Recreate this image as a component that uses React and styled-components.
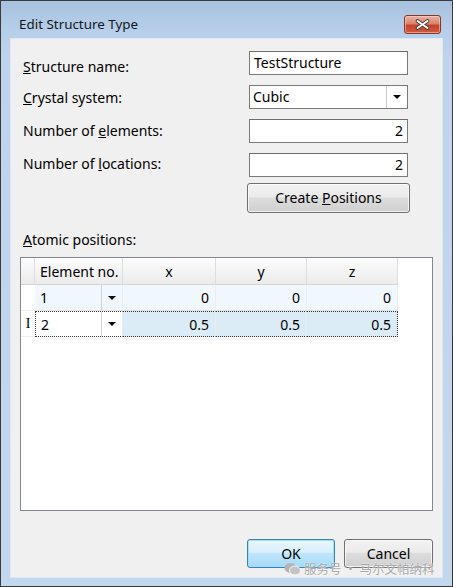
import styled, { createGlobalStyle } from "styled-components";

const Global = createGlobalStyle`
body {
  margin: 0;
  font-family: "Noto Sans", "Liberation Sans", sans-serif;
}
`

const Window = styled.div`
position: relative;
width: 453px;
height: 587px;
box-sizing: border-box;
border: 1px solid #3a3a3a;
background: linear-gradient(to bottom, #a7c1de 0px, #b7cfe9 30px, #bdd4ec 60px, #c2d8ef 100%);
display: flex;
flex-direction: column;
`

const TitleBar = styled.div`
height: 37px;
box-sizing: border-box;
padding: 9px 11px 0 18px;
display: flex;
align-items: center;
justify-content: space-between;
`

const Title = styled.span`
font-size: 13.4px;
color: #101820;
`

const CloseButton = styled.div`
width: 37px;
height: 19px;
box-sizing: border-box;
border: 1px solid #8a3424;
border-radius: 3px;
background: linear-gradient(to bottom, #eab3a5 0%, #d9826e 45%, #c5432c 55%, #cf5a3f 100%);
box-shadow: inset 0 0 0 1px rgba(255, 220, 210, 0.5);
display: flex;
align-items: center;
justify-content: center;
`

const Client = styled.div`
flex: 1;
margin: 0 9px 8px 9px;
background: #f0f0f0;
border: 1px solid #dde8f4;
padding: 12px 9px 0 9px;
display: flex;
flex-direction: column;
`

const Form = styled.div`
display: grid;
grid-template-columns: 226px 159px;
grid-auto-rows: 24px;
row-gap: 10px;
padding-left: 3px;
align-items: center;
`

const Label = styled.label`
font-size: 14px;
color: #000;
padding-top: ${(p) => Math.max(p.$dy || 0, 0) * 2}px;
padding-bottom: ${(p) => Math.max(-(p.$dy || 0), 0) * 2}px;
`

const TextBox = styled.div`
height: 24px;
box-sizing: border-box;
border: 1px solid #7a7a7a;
border-top-color: #6e6e6e;
background: #fff;
font-size: 14px;
line-height: 22px;
padding: 0 4px;
text-align: ${(p) => (p.$right ? "right" : "left")};
`

const Combo = styled.div`
height: 24px;
box-sizing: border-box;
border: 1px solid #7a7a7a;
background: #fff;
display: flex;
font-size: 14px;
line-height: 22px;
`

const ComboText = styled.span`
flex: 1;
padding: 0 3px;
`

const ComboArrow = styled.span`
width: 20px;
border-left: 1px solid #c8c8c8;
display: flex;
align-items: center;
justify-content: center;
`

const Arrow = styled.span`
width: 0;
height: 0;
border-left: 4px solid transparent;
border-right: 4px solid transparent;
border-top: 4px solid #000;
`

const Button = styled.div`
box-sizing: border-box;
width: ${(p) => p.$w}px;
height: ${(p) => p.$h}px;
border: 1px solid ${(p) => (p.$primary ? "#3c7fb1" : "#707070")};
border-radius: 3px;
background: ${(p) =>
  p.$primary
    ? "linear-gradient(to bottom, #eaf6fd 0%, #d9f0fc 45%, #bee6fd 50%, #a7d9f5 100%)"
    : "linear-gradient(to bottom, #f2f2f2 0%, #ebebeb 45%, #dddddd 50%, #cfcfcf 100%)"};
box-shadow: inset 0 0 0 1px ${(p) => (p.$primary ? "rgba(150, 225, 255, 0.9)" : "rgba(255,255,255,0.7)")};
display: flex;
align-items: center;
justify-content: center;
font-size: 14px;
color: #000;
`

const CreateButton = styled(Button)`
margin-left: -2px;
margin-top: -3px;
grid-column: 2;
`

const SectionLabel = styled(Label)`
margin: 20px 0 8px 3px;
line-height: 18px;
`

const Grid = styled.div`
height: 254px;
box-sizing: border-box;
border: 1px solid #828790;
background: #fff;
`

const Table = styled.div`
display: grid;
grid-template-columns: 14px 88px 93px 91px 91px;
grid-template-rows: 27px 26px 26px;
width: 377px;
font-size: 14px;
`

const HeadCell = styled.div`
background: linear-gradient(to bottom, #fdfdfd 0%, #f4f4f4 50%, #ebebeb 100%);
border-right: 1px solid #dedede;
border-bottom: 1px solid #d5d5d5;
display: flex;
align-items: center;
justify-content: ${(p) => (p.$left ? "flex-start" : "center")};
padding-left: ${(p) => (p.$left ? 5 : 0)}px;
`

const RowHead = styled.div`
background: #fff;
border-bottom: 1px solid #eeeeee;
display: flex;
align-items: center;
justify-content: center;
font-family: "Liberation Serif", serif;
font-size: 14px;
`

const Cell = styled.div`
background: ${(p) => p.$bg};
border-right: 1px solid #e6eef6;
border-bottom: 1px solid #e4e4e4;
display: flex;
align-items: center;
justify-content: flex-end;
padding-right: 6px;
border-top: ${(p) => (p.$focus ? "1px dotted #333" : "none")};
border-bottom-style: ${(p) => (p.$focus ? "dotted" : "solid")};
border-bottom-color: ${(p) => (p.$focus ? "#333" : "#e4e4e4")};
border-right-color: ${(p) => (p.$last && p.$focus ? "#333" : "#e6eef6")};
border-right-style: ${(p) => (p.$last && p.$focus ? "dotted" : "solid")};
`

const ElemCell = styled(Cell)`
justify-content: space-between;
padding: 0;
border-left: ${(p) => (p.$focus ? "1px dotted #333" : "none")};
`

const ElemValue = styled.span`
padding-left: 5px;
`

const ElemDrop = styled.span`
width: 20px;
align-self: stretch;
border-left: 1px solid #d4d4d4;
display: flex;
align-items: center;
justify-content: center;
`

const ButtonRow = styled.div`
display: flex;
justify-content: flex-end;
gap: 9px;
margin-top: 28px;
`

const Watermark = styled.div`
position: absolute;
left: 283px;
top: 558px;
display: flex;
align-items: center;
gap: 3px;
font-family: "Noto Sans CJK SC", sans-serif;
font-size: 12.5px;
color: #a9a9a9;
text-shadow: 0 0 2px #ffffff;
`

const rows = [
  { el: "1", vals: ["0", "0", "0"], focus: false },
  { el: "2", vals: ["0.5", "0.5", "0.5"], focus: true },
];

export default function App() {
  return (
    <Window>
      <Global />
      <TitleBar>
        <Title>Edit Structure Type</Title>
        <CloseButton>
          <svg width="15" height="11" viewBox="0 0 15 11">
            <path d="M2.5 2 L12.5 9 M12.5 2 L2.5 9" stroke="#4a3530" strokeWidth="3.6" strokeLinecap="round" />
            <path d="M2.5 2 L12.5 9 M12.5 2 L2.5 9" stroke="#ffffff" strokeWidth="2" strokeLinecap="round" />
          </svg>
        </CloseButton>
      </TitleBar>
      <Client>
        <Form>
          <Label $dy={3}><u>S</u>tructure name:</Label>
          <TextBox>TestStructure</TextBox>
          <Label $dy={0}><u>C</u>rystal system:</Label>
          <Combo>
            <ComboText>Cubic</ComboText>
            <ComboArrow><Arrow /></ComboArrow>
          </Combo>
          <Label $dy={-1}>Number of <u>e</u>lements:</Label>
          <TextBox $right>2</TextBox>
          <Label $dy={-2}>Number of <u>l</u>ocations:</Label>
          <TextBox $right>2</TextBox>
          <CreateButton $w={163} $h={30}>
            <span>Create <u>P</u>ositions</span>
          </CreateButton>
        </Form>
        <SectionLabel><u>A</u>tomic positions:</SectionLabel>
        <Grid>
          <Table>
            <HeadCell />
            <HeadCell $left>Element no.</HeadCell>
            <HeadCell>x</HeadCell>
            <HeadCell>y</HeadCell>
            <HeadCell>z</HeadCell>
            {rows.map((r) => [
              <RowHead key={r.el + "h"}>{r.focus ? "I" : ""}</RowHead>,
              <ElemCell key={r.el + "e"} $bg={r.focus ? "#ffffff" : "#f0f7fd"} $focus={r.focus}>
                <ElemValue>{r.el}</ElemValue>
                <ElemDrop><Arrow /></ElemDrop>
              </ElemCell>,
              ...r.vals.map((v, i) => (
                <Cell key={r.el + i} $bg={r.focus ? "#dcecf7" : "#f0f7fd"} $focus={r.focus} $last={i === 2}>
                  {v}
                </Cell>
              )),
            ])}
          </Table>
        </Grid>
        <ButtonRow>
          <Button $primary $w={88} $h={29}>OK</Button>
          <Button $w={89} $h={29}>Cancel</Button>
        </ButtonRow>
      </Client>
      <Watermark>
        <svg width="17" height="14" viewBox="0 0 17 14">
          <ellipse cx="6.5" cy="6" rx="6" ry="5" fill="#b4b4b4" />
          <ellipse cx="11" cy="8.5" rx="5.5" ry="4.5" fill="#c4c4c4" stroke="#ffffff" strokeWidth="0.8" />
        </svg>
        <span>服务号 · 马尔文帕纳科</span>
      </Watermark>
    </Window>
  );
}
